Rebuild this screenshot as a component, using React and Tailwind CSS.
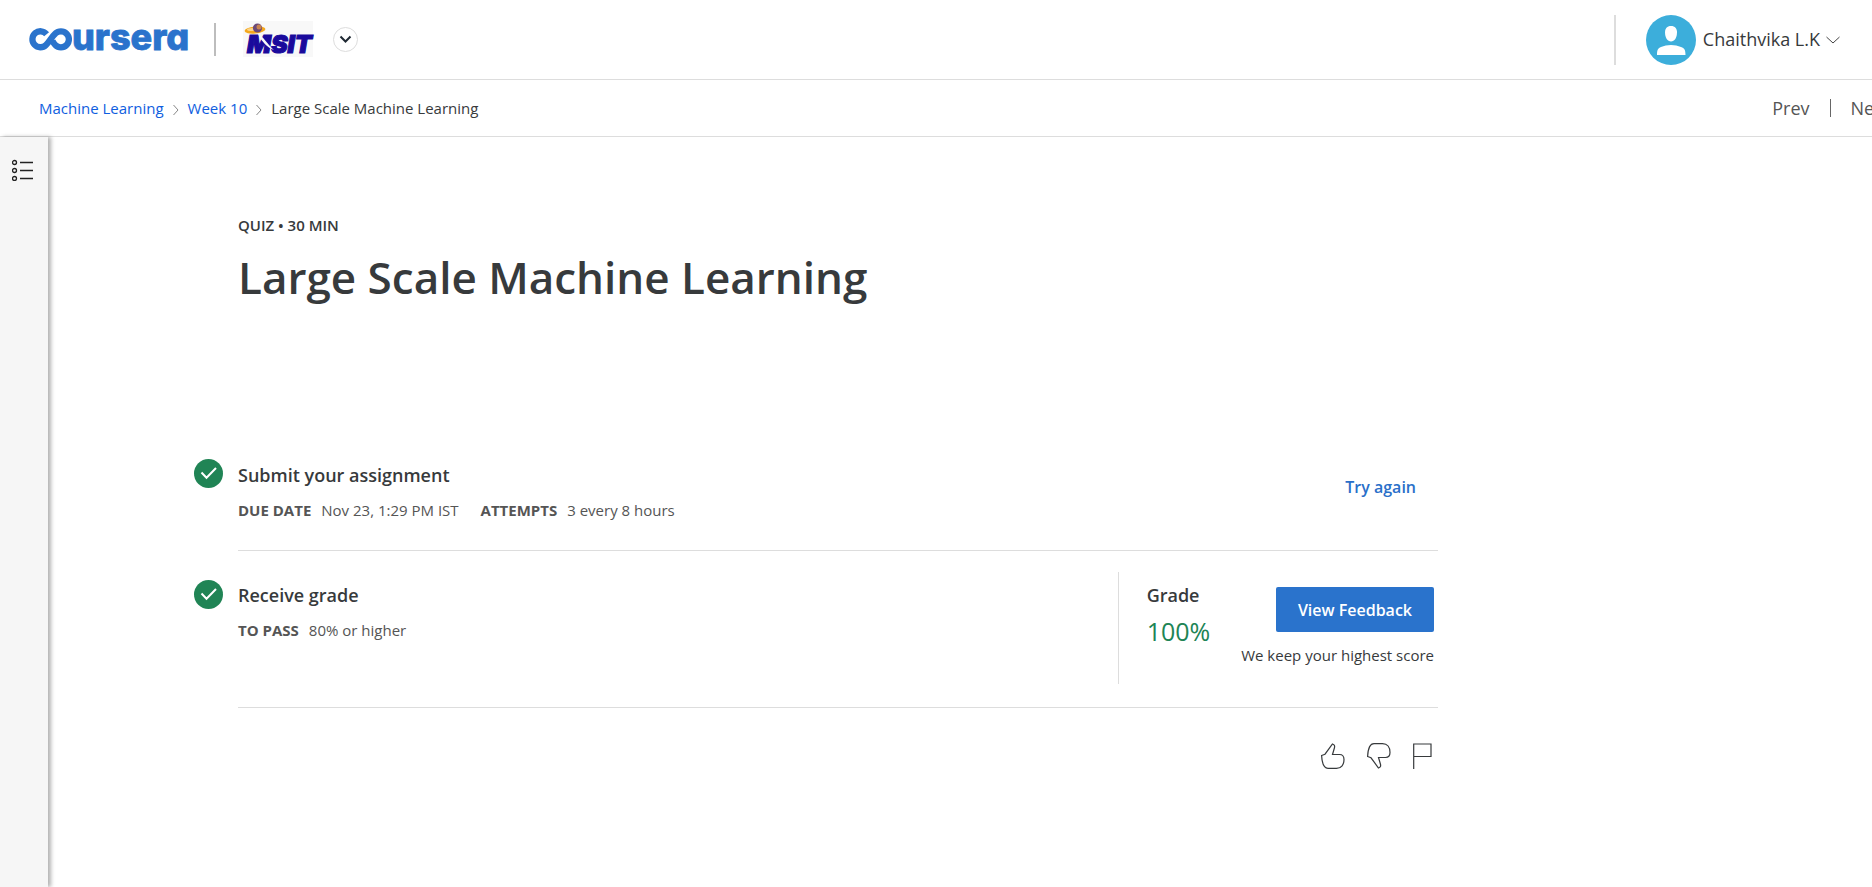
import React from "react";

function CourseraLogo() {
  return (
    <svg className="overflow-visible" width="160" height="40" viewBox="0 0 160 40" role="img" aria-label="coursera">
      <path
        d="M18.600 14.200 A8 8 0 1 0 18 25 C21.500 21.500 23.500 17 27.300 13.600 A8 8 0 1 1 27.300 25 C26 23.700 25.300 22.500 24.400 21"
        fill="none"
        stroke="#2a73cc"
        strokeWidth="6.300"
      />
      <text x="44" y="30" fill="#2a73cc" stroke="#2a73cc" strokeWidth="0.800" fontFamily="Inter, sans-serif" fontWeight="800" fontSize="36" style={{ fontFeatureSettings: "'cv11'" }}>ursera</text>
    </svg>
  );
}

function MsitLogo() {
  return (
    <svg className="overflow-visible" width="70" height="38" viewBox="0 0 70 38" role="img" aria-label="MSIT">
      <rect width="70" height="36" fill="#f8f8f8" />
      <ellipse cx="12" cy="9" rx="10.500" ry="3.600" fill="#f5a81c" transform="rotate(-6 12 9)" />
      <ellipse cx="9" cy="8.500" rx="5" ry="1.500" fill="#fbd58c" />
      <circle cx="14.500" cy="7" r="4.600" fill="#6b4a78" />
      <circle cx="16" cy="6" r="2.500" fill="#c98450" />
      <text x="4" y="32" fill="#1a0a9c" stroke="#1a0a9c" strokeWidth="1.200" fontFamily="Inter, sans-serif" fontWeight="900" fontStyle="italic" fontSize="25">MSIT</text>
      <path d="M15 13 C20 15 24 23 31 29 C25 27 18 20 15 13Z" fill="#f8f8f8" />
    </svg>
  );
}

function Check() {
  return (
    <svg className="shrink-0" width="29" height="29" viewBox="0 0 29 29" aria-hidden="true">
      <circle cx="14.500" cy="14.500" r="14.500" fill="#208455" />
      <path d="M7.500 13.500 L12.500 18.800 L22 9" fill="none" stroke="#fff" strokeWidth="2" />
    </svg>
  );
}

function Crumb() {
  return (
    <svg width="8" height="12" viewBox="0 0 8 12" className="mt-1" aria-hidden="true">
      <path d="M1.500 1 L6 6 L1.500 11" fill="none" stroke="#888" strokeWidth="1" />
    </svg>
  );
}

function Detail({ label, children }) {
  return (
    <div className="flex gap-[10px]">
      <dt className="font-bold">{label}</dt>
      <dd>{children}</dd>
    </div>
  );
}

export default function App() {
  return (
    <div className="flex min-h-screen flex-col overflow-x-hidden bg-white font-['Open_Sans',sans-serif] text-[#373a3c]">
      <header className="flex h-20 items-center border-b border-[#ddd] pl-7 pr-8">
        <a href="#home"><CourseraLogo /></a>
        <div className="ml-[26px] h-[33px] w-[2px] bg-[#bdbdbd]" />
        <a href="#msit" className="ml-[27px]"><MsitLogo /></a>
        <button aria-label="Switch organisation" className="ml-5 flex size-[25px] items-center justify-center rounded-full border border-[#ddd]">
          <svg width="13" height="9" viewBox="0 0 13 9"><path d="M1.500 1.500 L6.500 6.500 L11.500 1.500" fill="none" stroke="#1f2933" strokeWidth="2" /></svg>
        </button>
        <div className="ml-auto h-[50px] w-[2px] bg-[#ddd]" />
        <button className="ml-[30px] flex items-center text-[18px]">
          <svg width="50" height="50" viewBox="0 0 50 50" aria-hidden="true">
            <circle cx="25" cy="25" r="25" fill="#3caedb" />
            <path d="M19 17.500 C19 13.500 21 11 25 11 C29 11 31 13.500 31 17.500 C31 22.500 28.500 26.500 25 26.500 C21.500 26.500 19 22.500 19 17.500Z" fill="#fff" />
            <path d="M11 40 C11 35 12 33 15 32 C21 29.300 29 29.300 35 32 C38.500 33.300 39.500 35 39.500 40Z" fill="#fff" />
          </svg>
          <span className="ml-[7px]">Chaithvika L.K</span>
          <svg className="ml-[6px]" width="14" height="8" viewBox="0 0 14 8" aria-hidden="true"><path d="M.5 1 L7 7 L13.500 1" fill="none" stroke="#444" strokeWidth="1" /></svg>
        </button>
      </header>
      <nav className="flex h-[57px] items-center justify-between border-b border-[#ddd] pl-[39px]">
        <ol className="flex items-center gap-2 text-[15px]">
          <li><a href="#course" className="text-[#0f5ee0]">Machine Learning</a></li>
          <li aria-hidden="true"><Crumb /></li>
          <li><a href="#week" className="text-[#0f5ee0]">Week 10</a></li>
          <li aria-hidden="true"><Crumb /></li>
          <li>Large Scale Machine Learning</li>
        </ol>
        <div className="-mr-[18px] flex items-center gap-5 text-[18px] text-[#555]">
          <a href="#prev">Prev</a>
          <div className="h-[18px] w-px bg-[#666]" />
          <a href="#next">Next</a>
        </div>
      </nav>
      <div className="flex grow">
        <aside className="w-12 shrink-0 bg-[#f6f6f6] pl-3 pt-[22px] shadow-[3px_0_4px_rgba(0,0,0,0.3)]">
          <button aria-label="Open course outline" className="block">
            <svg width="22" height="22" viewBox="0 0 22 22" fill="none" stroke="#222" strokeWidth="1.300">
              <circle cx="2.500" cy="3.500" r="2" /><circle cx="2.500" cy="11.500" r="2" /><circle cx="2.500" cy="19.500" r="2" />
              <path d="M8 3.500H21M8 11.500H21M8 19.500H21" />
            </svg>
          </button>
        </aside>
        <main className="ml-[146px] w-full max-w-[1244px] pt-[78px]">
          <div className="pl-11">
            <p className="text-[15px] leading-5 font-semibold">QUIZ • 30 MIN</p>
            <h1 className="mt-3 text-[44px] leading-[60px] font-semibold">Large Scale Machine Learning</h1>
          </div>
          <section className="mt-[152px] flex gap-[15px]">
            <Check />
            <div className="flex h-[92px] grow items-start justify-between border-b border-[#ddd] pr-[22px]">
              <div>
                <h2 className="mt-1 text-[18px] leading-6 font-semibold">Submit your assignment</h2>
                <dl className="mt-[13px] flex gap-[22px] text-[15px] leading-5 text-[#555]">
                  <Detail label="DUE DATE">Nov 23, 1:29 PM IST</Detail>
                  <Detail label="ATTEMPTS">3 every 8 hours</Detail>
                </dl>
              </div>
              <button className="mt-4 text-[16px] leading-6 font-semibold text-[#2a6fc9]">Try again</button>
            </div>
          </section>
          <section className="flex gap-[15px]">
            <div className="pt-[29px]"><Check /></div>
            <div className="flex h-[157px] grow items-start justify-between border-b border-[#ddd] pt-[21px] pr-1">
              <div>
                <h2 className="mt-[11px] text-[18px] leading-6 font-semibold">Receive grade</h2>
                <dl className="mt-[13px] text-[15px] leading-5 text-[#555]">
                  <Detail label="TO PASS">80% or higher</Detail>
                </dl>
              </div>
              <div className="flex h-28 border-l border-[#ddd] pl-7">
                <div className="mr-[31px]">
                  <h3 className="mt-[11px] text-[18px] leading-6 font-semibold">Grade</h3>
                  <p className="text-[25px] leading-[48px] text-[#208455]">100%</p>
                </div>
                <div className="flex flex-col items-end pt-[15px]">
                  <button className="h-[45px] rounded-[2px] bg-[#2a73cc] px-[22px] text-[16px] font-semibold text-white">View Feedback</button>
                  <p className="mt-[13px] text-[15px] leading-5">We keep your highest score</p>
                </div>
              </div>
            </div>
          </section>
          <div className="mt-[35px] flex justify-end gap-[22px] pr-[6px]">
            <button aria-label="Like">
              <svg width="24" height="26" viewBox="0 0 24 26" fill="none" stroke="#373a3c" strokeWidth="1.200"><path d="M.6 12.500 L4 11.200 L11.500 1 C13.500 1.500 14 3 13.400 5 L11.500 11.500 H18.500 C21.500 11.500 23 13.500 23 16.500 C23 21.500 20.500 25.300 15.500 25.300 H7 C2.500 25.300 1 20.500 .6 12.500Z" /></svg>
            </button>
            <button aria-label="Dislike">
              <svg width="24" height="26" viewBox="0 0 24 26" fill="none" stroke="#373a3c" strokeWidth="1.200"><path d="M.6 13.500 L4 14.800 L11.500 25 C13.500 24.500 14 23 13.400 21 L11.500 14.500 H18.500 C21.500 14.500 23 12.500 23 9.500 C23 4.500 20.500 .7 15.500 .7 H7 C2.500 .7 1 5.500 .6 13.500Z" /></svg>
            </button>
            <button aria-label="Report">
              <svg width="19" height="26" viewBox="0 0 19 26" fill="none" stroke="#373a3c" strokeWidth="1.200"><path d="M.7 26V1H18V13.500H.7" /></svg>
            </button>
          </div>
        </main>
      </div>
    </div>
  );
}
